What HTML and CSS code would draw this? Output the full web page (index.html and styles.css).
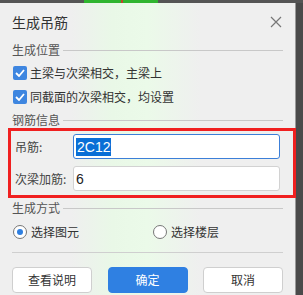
FILE: index.html
```html
<!DOCTYPE html>
<html lang="zh">
<head>
    <meta charset="UTF-8">
    <title>生成吊筋</title>
    <link rel="stylesheet" href="styles.css">
</head>
<body>
    <div class="topbar">
        <div class="topbar-green"><span class="topbar-red"></span></div>
    </div>
    <div class="screen">
        <div class="dialog">
            <div class="dialog-head">
                <span class="dialog-title">生成吊筋</span>
                <svg class="close" width="12" height="12" viewBox="0 0 12 12">
                    <path d="M1 1 L11 11 M11 1 L1 11" stroke="#777" stroke-width="1.2" fill="none"/>
                </svg>
            </div>

            <div class="group-title"><span>生成位置</span><i></i></div>
            <label class="check-row first"><span class="checkbox"><svg width="10" height="8" viewBox="0 0 10 8"><path d="M1 4 L4 7 L9 1" stroke="#fff" stroke-width="1.8" fill="none"/></svg></span>主梁与次梁相交，主梁上</label>
            <label class="check-row"><span class="checkbox"><svg width="10" height="8" viewBox="0 0 10 8"><path d="M1 4 L4 7 L9 1" stroke="#fff" stroke-width="1.8" fill="none"/></svg></span>同截面的次梁相交，均设置</label>

            <div class="group-title info"><span>钢筋信息</span><i></i></div>
            <div class="red-box">
                <div class="field-row">
                    <span class="field-label">吊筋:</span>
                    <div class="field focus"><span class="selected">2C12</span></div>
                </div>
                <div class="field-row">
                    <span class="field-label">次梁加筋:</span>
                    <div class="field">6</div>
                </div>
            </div>

            <div class="group-title mode"><span>生成方式</span><i></i></div>
            <div class="radio-row">
                <label class="radio-item"><span class="radio on"></span>选择图元</label>
                <label class="radio-item"><span class="radio"></span>选择楼层</label>
            </div>

            <div class="sep"></div>

            <div class="buttons">
                <div class="btn">查看说明</div>
                <div class="btn primary">确定</div>
                <div class="btn">取消</div>
            </div>
        </div>
        <div class="side"></div>
    </div>
</body>
</html>
```

FILE: styles.css
```css
*{
    box-sizing: border-box;
}
body{
    margin: 0;
    width: 303px;
    height: 295px;
    overflow: hidden;
    background-color: #4a4a4a;
    font-family: "Noto Sans CJK SC", "Noto Sans", sans-serif;
    font-size: 12px;
    line-height: 16px;
    color: #333;
}
.topbar{
    height: 3px;
    background-color: #555;
}
.topbar-green{
    margin-left: 84px;
    width: 74px;
    height: 3px;
    background-color: #2fb52f;
    position: relative;
}
.topbar-red{
    position: absolute;
    left: 37px;
    top: 0;
    width: 2px;
    height: 3px;
    background-color: #c0452a;
}
.screen{
    display: flex;
    height: 292px;
}
.dialog{
    width: 296px;
    border-right: 1px solid #9a9a9a;
    background: linear-gradient(90deg, #efefef 0%, #efefef 24%, #e9f8e7 38%, #ebfae9 50%, #efefef 68%, #efefef 100%);
    padding: 0 12px;
}
.side{
    flex: 1;
    background-color: #4a4a4a;
}
.dialog-head{
    display: flex;
    align-items: center;
    justify-content: space-between;
    height: 38px;
}
.dialog-title{
    font-size: 14px;
    line-height: 18px;
    color: #333;
}
.close{
    margin-right: 1px;
}
.group-title{
    display: flex;
    align-items: center;
    height: 18px;
    color: #555;
}
.group-title span{
    padding-right: 3px;
}
.group-title i{
    flex: 1;
    height: 1px;
    background-color: #c8c8c8;
}
.group-title.info{
    margin-top: 2px;
}
.group-title.mode{
    margin-top: 1px;
}
.check-row{
    display: flex;
    align-items: center;
    height: 24px;
    color: #333;
}
.check-row.first{
    margin-top: 2px;
}
.checkbox{
    width: 14px;
    height: 14px;
    border-radius: 2px;
    background-color: #3e86e0;
    display: flex;
    align-items: center;
    justify-content: center;
    margin: 0 3px 0 1px;
}
.red-box{
    margin: -1px -13px 0 -4px;
    border: 3px solid #f02020;
    padding: 3px 13px 4px 4px;
    display: flex;
    flex-direction: column;
    gap: 7px;
}
.field-row{
    display: flex;
    align-items: center;
    height: 25px;
}
.field-label{
    width: 58px;
    color: #444;
}
.field{
    flex: 1;
    height: 25px;
    background-color: #fff;
    border: 1px solid #d2d2d2;
    border-radius: 3px;
    display: flex;
    align-items: center;
    padding-left: 2px;
    font-family: "Liberation Sans", sans-serif;
    font-size: 14px;
    color: #222;
}
.field.focus{
    border-color: #3c7fd8;
}
.selected{
    background-color: #0a6fd6;
    color: #fff;
    padding: 0 1px;
    line-height: 18px;
}
.radio-row{
    display: flex;
    align-items: center;
    height: 30px;
}
.radio-item{
    display: flex;
    align-items: center;
    flex: 0 0 140px;
    color: #333;
}
.radio-item:last-child{
    flex-basis: auto;
}
.radio{
    width: 14px;
    height: 14px;
    border-radius: 50%;
    border: 1px solid #777;
    background-color: #fff;
    margin: 0 4px 0 1px;
    position: relative;
}
.radio.on::after{
    content: "";
    position: absolute;
    left: 3px;
    top: 3px;
    width: 6px;
    height: 6px;
    border-radius: 50%;
    background-color: #2f7fe0;
}
.sep{
    height: 1px;
    background-color: #cfcfcf;
    margin-top: 5px;
}
.buttons{
    display: flex;
    justify-content: space-between;
    margin-top: 14px;
}
.btn{
    width: 80px;
    height: 26px;
    border: 1px solid #cfcfcf;
    border-radius: 4px;
    background-color: #fff;
    display: flex;
    align-items: center;
    justify-content: center;
    color: #333;
}
.btn.primary{
    background-color: #2f80e2;
    border-color: #2f80e2;
    color: #fff;
}
```
